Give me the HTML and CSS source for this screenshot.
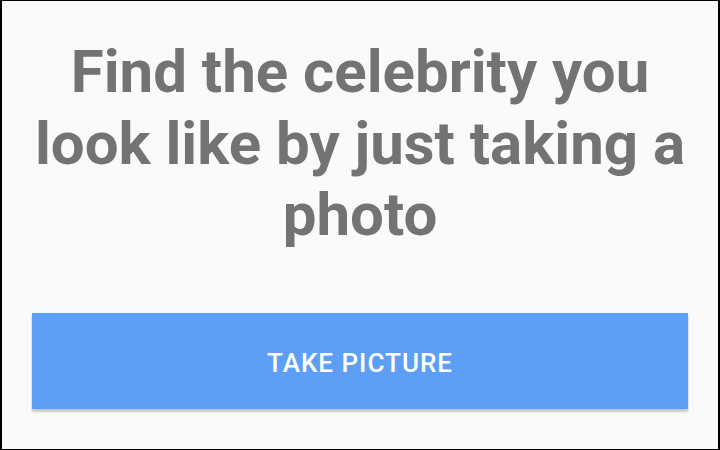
FILE: index.html
```html
<!DOCTYPE html>
<html>
<head>
<meta charset="utf-8">
<link rel="stylesheet" href="styles.css">
</head>
<body>
<div class="frame">
  <h1 class="title">Find the celebrity you look like by just taking a photo</h1>
  <button class="take-btn">TAKE PICTURE</button>
</div>
</body>
</html>
```
FILE: styles.css
```css
html, body {
  margin: 0;
  padding: 0;
}
body {
  width: 720px;
  height: 450px;
  overflow: hidden;
  font-family: Roboto, "Noto Sans", sans-serif;
}
.frame {
  box-sizing: border-box;
  width: 720px;
  height: 450px;
  background: #fafafa;
  border-style: solid;
  border-color: #000;
  border-width: 1px 2px 1px 2px;
  display: flex;
  flex-direction: column;
  align-items: stretch;
  padding: 35px 30px 0 30px;
}
.title {
  margin: 0;
  font-size: 60px;
  font-weight: 700;
  line-height: 71.5px;
  color: #737373;
  text-align: center;
}
.take-btn {
  margin-top: 62px;
  height: 96px;
  border: none;
  background: #5c9ff4;
  color: #ffffff;
  font-family: Roboto, sans-serif;
  font-weight: 500;
  font-size: 26px;
  letter-spacing: 1px;
  box-shadow: 0 0 1px rgba(0,0,0,0.12), 0 3px 2px rgba(0,0,0,0.2);
  padding: 4px 0 0 0;
}
```
